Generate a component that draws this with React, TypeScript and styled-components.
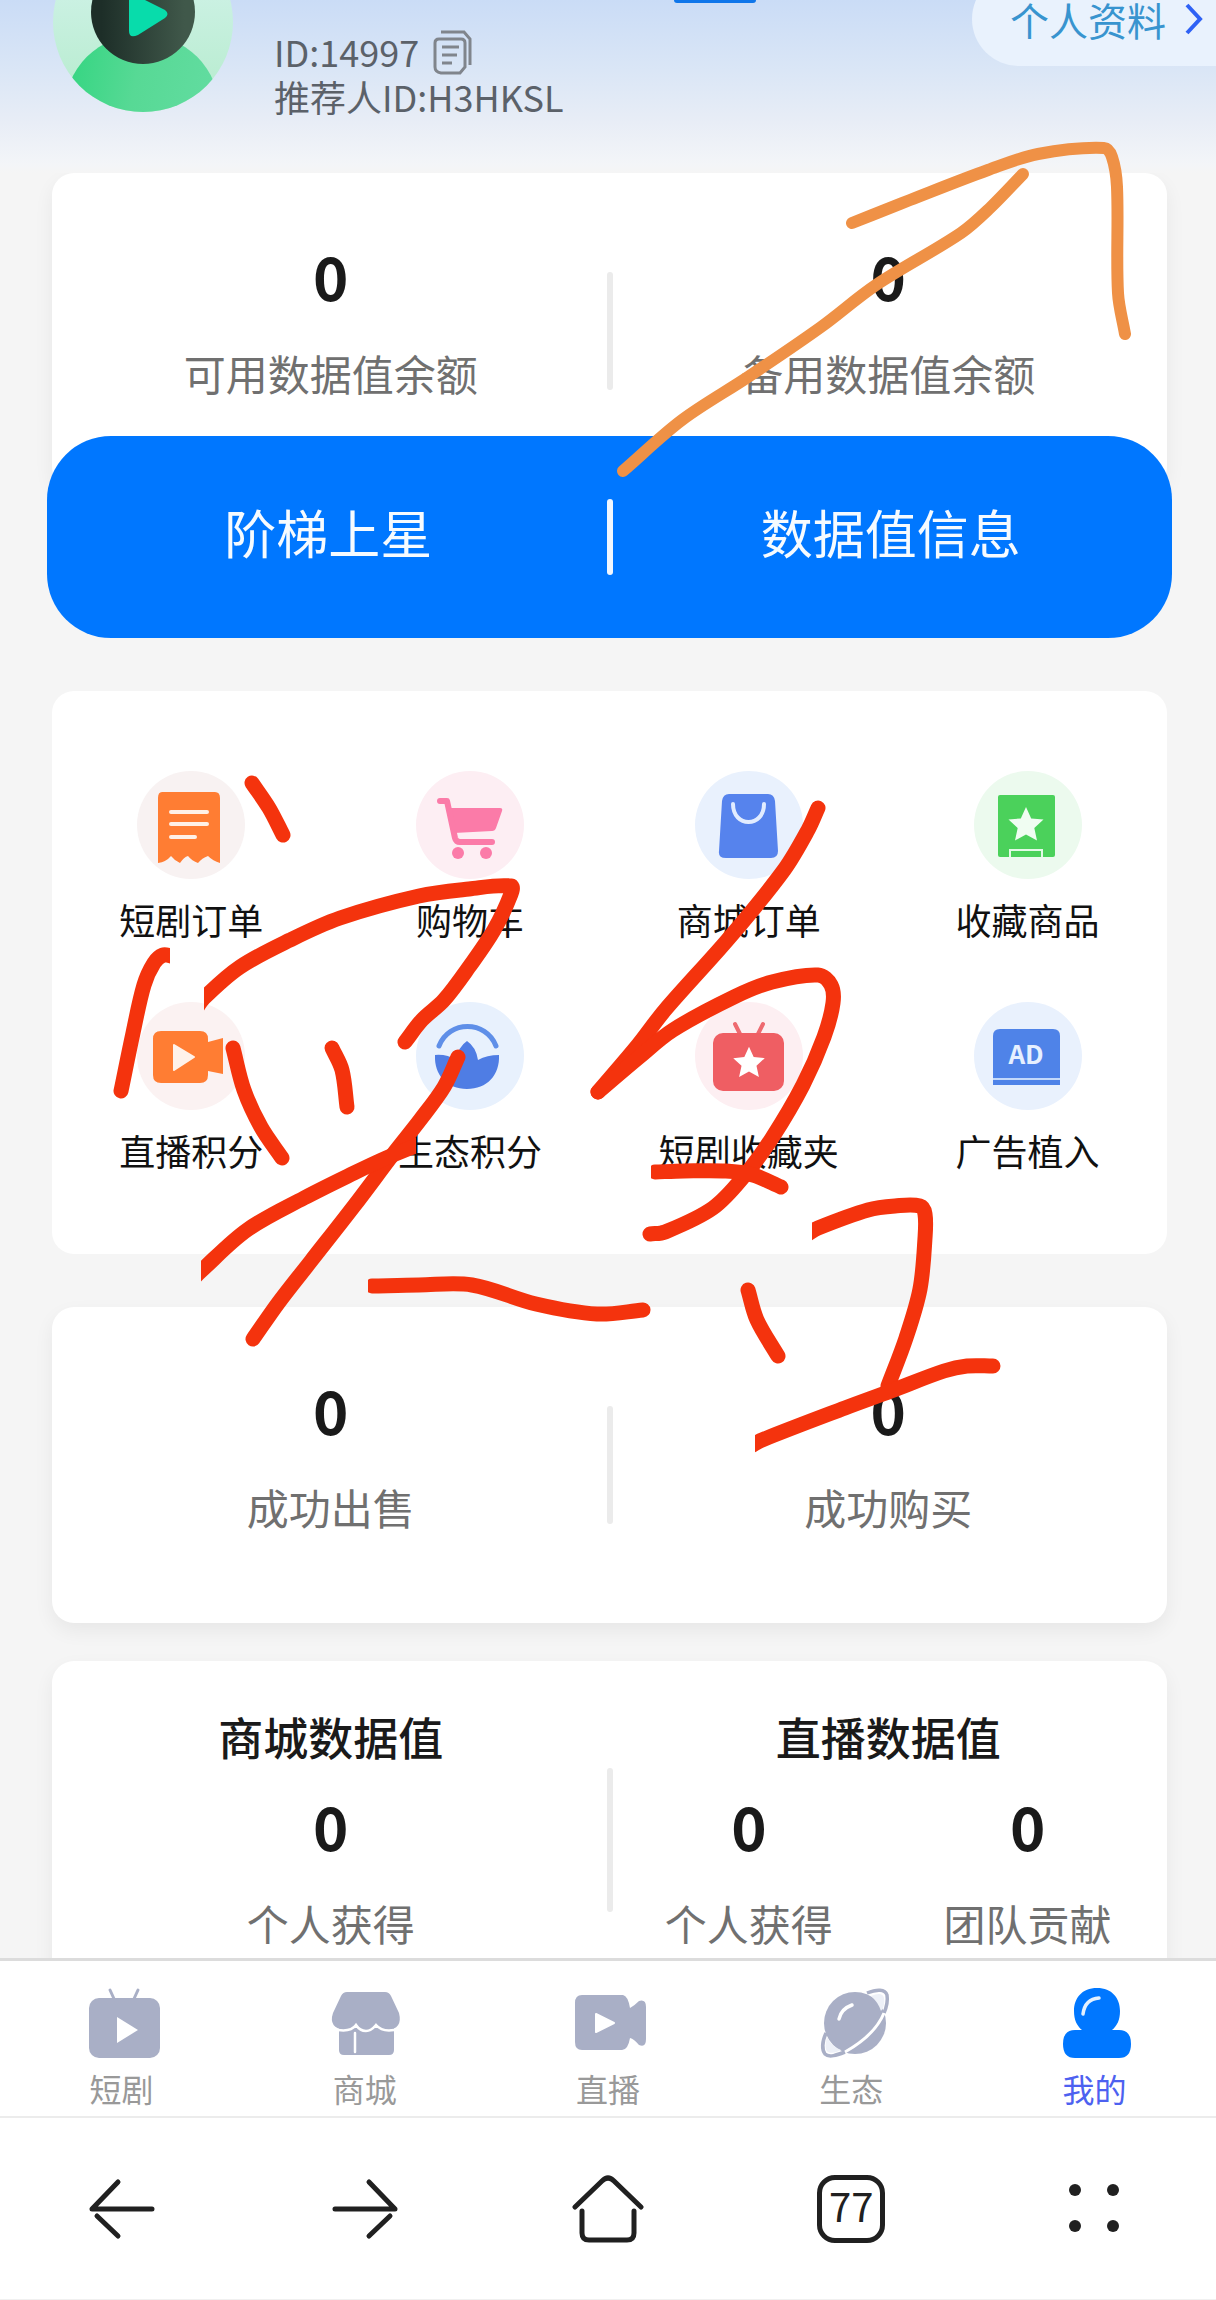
import React from "react";
import styled, { createGlobalStyle } from "styled-components";

const GlobalStyle = createGlobalStyle`
  *, *::before, *::after { box-sizing: border-box; }
  body { margin: 0; background: #f5f5f5; }
  button {
    margin: 0; padding: 0; border: 0; background: none;
    font: inherit; color: inherit; cursor: pointer;
  }
  a { color: inherit; text-decoration: none; }
  svg { display: block; flex: none; }
`;

const Page = styled.div`
  position: relative;
  display: flex;
  flex-direction: column;
  height: 100vh;
  overflow: hidden;
  background: #f5f5f5;
  color: #1a1a1a;
  font-family: "Noto Sans CJK SC", "Noto Sans", sans-serif;
`;

const Content = styled.main`
  flex: 1;
  min-height: 0;
  overflow: hidden;
`;

/* ---------- header ---------- */

const Header = styled.header`
  position: relative;
  display: flex;
  align-items: flex-start;
  height: 173px;
  padding-left: 52px;
  overflow: hidden;
  background: linear-gradient(180deg, #cadcf6 0, #dae6f6 70px, #e8edf6 122px, #f3f5f8 164px, #f5f5f5 173px);
`;

const ActiveMark = styled.span`
  position: absolute;
  top: 0;
  left: 55.4%;
  width: 82px;
  height: 3px;
  border-radius: 0 0 4px 4px;
  background: #0f76ea;
`;

const AvatarSvg = styled.svg`
  margin-top: -70px;
`;

const Identity = styled.div`
  margin-left: 38px;
  padding-top: 29px;
  font-size: 36px;
  line-height: 45px;
  color: #5b6169;
`;

const IdRow = styled.div`
  display: flex;
  align-items: center;
  gap: 14px;
  height: 45px;
`;

const ProfileLink = styled.a`
  display: flex;
  align-items: center;
  gap: 18px;
  height: 94px;
  margin-top: -28px;
  margin-left: auto;
  padding: 0 12px 0 38px;
  border-radius: 47px 0 0 47px;
  background: #e9f2fd;
  color: #3894cf;
  font-size: 39px;
  line-height: 36px;
`;

/* ---------- cards ---------- */

const Stack = styled.div`
  padding: 0 49px 0 52px;
`;

const Card = styled.section<{ $gap?: number; $raised?: boolean }>`
  display: flex;
  align-items: center;
  margin-top: ${(p) => p.$gap ?? 0}px;
  border-radius: 22px;
  background: #fff;
  box-shadow: ${(p) => (p.$raised ? "0 8px 20px rgba(0, 0, 0, 0.06)" : "none")};
`;

const Divider = styled.span<{ $height: number; $light?: boolean }>`
  flex: none;
  width: 6px;
  height: ${(p) => p.$height}px;
  margin: 0 -3px;
  border-radius: 3px;
  background: ${(p) => (p.$light ? "#f1f7ff" : "#ebebeb")};
`;

const Half = styled.div`
  flex: 1;
  padding: 72px 0 86px;
`;

const TitledHalf = styled.div`
  flex: 1;
  padding: 46px 0 66px;
`;

const Stat = styled.div`
  display: flex;
  flex: 1;
  flex-direction: column;
  align-items: center;
  gap: 38px;
`;

const StatRow = styled.div`
  display: flex;
`;

const StatValue = styled.strong`
  font-size: 60px;
  font-weight: 700;
  line-height: 60px;
`;

const StatLabel = styled.span`
  font-size: 42px;
  line-height: 60px;
  color: #707070;
  white-space: nowrap;
`;

const GroupTitle = styled.h2`
  margin: 0 0 28px;
  font-size: 45px;
  font-weight: 500;
  line-height: 60px;
  text-align: center;
`;

const ActionBar = styled.div`
  position: relative;
  display: flex;
  align-items: center;
  height: 202px;
  margin: -53px -5px 0;
  border-radius: 64px;
  background: #0077ff;
  color: #f6fbff;
`;

const ActionButton = styled.button`
  flex: 1;
  height: 100%;
  padding-bottom: 10px;
  font-size: 52px;
  line-height: 60px;
`;

const ShortcutGrid = styled.section`
  display: grid;
  grid-template-columns: repeat(4, 1fr);
  row-gap: 59px;
  margin-top: 53px;
  padding: 80px 0;
  border-radius: 22px;
  background: #fff;
`;

const Shortcut = styled.button`
  display: flex;
  flex-direction: column;
  align-items: center;
  gap: 16px;
  font-size: 36px;
  line-height: 48px;
  color: #111;
`;

const ShortcutIcon = styled.span<{ $tint: string }>`
  width: 108px;
  height: 108px;
  border-radius: 50%;
  background: ${(p) => p.$tint};
`;

/* ---------- bottom bars ---------- */

const TabBar = styled.nav`
  display: flex;
  border-top: 3px solid #dcdcdc;
  background: #fff;
`;

const Tab = styled.a<{ $active?: boolean }>`
  display: flex;
  flex: 1;
  flex-direction: column;
  align-items: center;
  gap: 8px;
  padding: 23px 0 8px;
  font-size: 32px;
  line-height: 40px;
  color: ${(p) => (p.$active ? "#4d61f0" : "#999")};
`;

const BrowserBar = styled.nav`
  display: flex;
  height: 184px;
  border-top: 2px solid #ececec;
  border-bottom: 1px solid #f0f0f0;
  background: #fff;
`;

const BrowserButton = styled.button`
  display: flex;
  flex: 1;
  align-items: center;
  justify-content: center;
`;

const TabCount = styled.span`
  display: flex;
  align-items: center;
  justify-content: center;
  width: 68px;
  height: 68px;
  padding-bottom: 8px;
  border: 5px solid #202020;
  border-radius: 18px;
  font-size: 40px;
  line-height: 48px;
  color: #202020;
`;

const Scribble = styled.svg`
  position: absolute;
  top: 0;
  left: 0;
  width: 100%;
  height: auto;
  pointer-events: none;
`;

/* ---------- drawings ---------- */

const STAR =
  "M0-18 L5.2-6.6 L17.5-5.4 L8.3 3 L11 15.5 L0 9.4 L-11 15.5 L-8.3 3 L-17.5-5.4 L-5.2-6.6Z";

const Avatar = () => (
  <AvatarSvg width="184" height="184" viewBox="0 0 184 184" aria-label="头像">
    <defs>
      <clipPath id="avatarClip"><circle cx="91" cy="92" r="90" /></clipPath>
      <linearGradient id="avatarBg" x1="0" y1="0" x2="0" y2="1">
        <stop offset="0.35" stopColor="#cbf1e3" /><stop offset="1" stopColor="#b4ebcb" />
      </linearGradient>
      <linearGradient id="avatarBody" x1="0" y1="0" x2="1" y2="0.2">
        <stop offset="0" stopColor="#30d57f" /><stop offset="0.5" stopColor="#57d995" /><stop offset="1" stopColor="#62dca0" />
      </linearGradient>
      <linearGradient id="avatarHead" x1="0" y1="0" x2="1" y2="0">
        <stop offset="0.1" stopColor="#1d2e28" /><stop offset="0.9" stopColor="#40584a" />
      </linearGradient>
    </defs>
    <g clipPath="url(#avatarClip)">
      <rect width="184" height="184" fill="url(#avatarBg)" />
      <ellipse cx="90" cy="182" rx="78" ry="78" fill="url(#avatarBody)" />
    </g>
    <circle cx="91" cy="82" r="52" fill="url(#avatarHead)" />
    <path d="M77 62 L113 80 Q118 84 113 88 L86 105 Q77 109 77 101 V62Z" fill="#08dcab" />
  </AvatarSvg>
);

const CopyIcon = () => (
  <svg width="40" height="46" viewBox="0 0 40 46" fill="none" stroke="#80858c" strokeWidth="3">
    <path d="M8 3 H31 L37 10 V36" />
    <path d="M6 10 H28 Q32 10 32 14 V38 L27 44 H8 Q2 43 2 38 V14 Q2 10 6 10Z" />
    <path d="M9 18 H26 M9 26 H24 M9 34 H19" />
  </svg>
);

const ReceiptIcon = () => (
  <svg width="108" height="108" viewBox="0 0 108 108">
    <path d="M25 21 H78 Q83 21 83 27 V92 Q76 90 71 85 Q65 87 61 92 Q55 90 51 85 Q47 86 43 92 Q38 90 34 85 Q29 91 21 92 V27 Q21 21 25 21Z" fill="#ff7d33" />
    <path d="M34 41 H70 M34 53 H70 M34 66 H58" stroke="#fff0e6" strokeWidth="4" strokeLinecap="round" />
  </svg>
);

const CartIcon = () => (
  <svg width="108" height="108" viewBox="0 0 108 108" fill="#fb7ba8">
    <path d="M32 37 H84 Q87 37 86 40 L80 57 Q79 60 76 60 L38 62Z" />
    <path d="M24 30 H31 L39 67 Q40 71 44 71 H76" fill="none" stroke="#fb7ba8" strokeWidth="6" strokeLinecap="round" strokeLinejoin="round" />
    <circle cx="42" cy="82" r="6" />
    <circle cx="70" cy="82" r="6" />
  </svg>
);

const BagIcon = () => (
  <svg width="108" height="108" viewBox="0 0 108 108">
    <path d="M34 23 H73 Q79 23 80 30 L83 80 Q83 87 76 87 H31 Q23 87 24 80 L27 30 Q28 23 34 23Z" fill="#5683ed" />
    <path d="M38 33 C38 57 69 57 69 33" fill="none" stroke="#e1ecff" strokeWidth="4" strokeLinecap="round" />
  </svg>
);

const BookStarIcon = () => (
  <svg width="108" height="108" viewBox="0 0 108 108">
    <rect x="24" y="24" width="57" height="62" rx="2" fill="#4bd15b" />
    <path d={STAR} transform="translate(52 54)" fill="#f0fdf2" />
    <path d="M36 86 V79 H68 V86" fill="none" stroke="#e3fae6" strokeWidth="2" />
  </svg>
);

const VideoIcon = () => (
  <svg width="108" height="108" viewBox="0 0 108 108">
    <path d="M24 29 H63 Q71 29 71 37 V40 L86 36 V72 L71 69 V73 Q71 81 63 81 H24 Q16 81 16 73 V37 Q16 29 24 29Z" fill="#ff7d33" />
    <path d="M37 43 L57 55 L37 68Z" fill="#fff2ea" stroke="#fff2ea" strokeWidth="2" strokeLinejoin="round" />
  </svg>
);

const LotusIcon = () => (
  <svg width="108" height="108" viewBox="0 0 108 108">
    <path d="M23 44 C33 18 70 18 80 44" fill="none" stroke="#5f8fe8" strokeWidth="5" strokeLinecap="round" />
    <path d="M51 39 Q60 45 62 58 Q71 53 83 53 C84 73 71 87 51 87 C31 87 18 73 19 53 Q31 52 40 58 Q42 45 51 39Z" fill="#4f7de4" />
  </svg>
);

const TvStarIcon = () => (
  <svg width="108" height="108" viewBox="0 0 108 108">
    <path d="M40 22 L46 34 M68 22 L62 34" stroke="#ee6a70" strokeWidth="4" strokeLinecap="round" />
    <rect x="18" y="31" width="71" height="58" rx="10" fill="#ef5e63" />
    <path d={STAR} transform="translate(54 61) scale(0.9)" fill="#fff" />
  </svg>
);

const AdIcon = () => (
  <svg width="108" height="108" viewBox="0 0 108 108">
    <path d="M26 27 H79 Q86 27 86 34 V76 H19 V34 Q19 27 26 27Z" fill="#4f83e8" />
    <path d="M19 76 H86 V83 H19Z" fill="#4f83e8" />
    <path d="M19 77 H86" stroke="#c3d9fb" strokeWidth="2" />
    <text x="52" y="62" textAnchor="middle" fontSize="26" fontWeight="700" fill="#e6f0ff">AD</text>
  </svg>
);

const GREY = "#a9afc6";

const TvTabIcon = () => (
  <svg width="80" height="76" viewBox="0 0 80 76">
    <path d="M28 6 L33 17 M56 6 L51 17" stroke={GREY} strokeWidth="3" strokeLinecap="round" />
    <rect x="7" y="14" width="71" height="60" rx="10" fill={GREY} />
    <path d="M35 33 L56 46 L35 59Z" fill="#fff" />
  </svg>
);

const ShopTabIcon = () => (
  <svg width="80" height="76" viewBox="0 0 80 76">
    <path d="M14 44 H69 V66 Q69 71 64 71 H19 Q14 71 14 66Z" fill={GREY} />
    <path d="M22 8 H60 Q64 8 66 12 L74 29 Q78 45 62 46 Q55 46 51 41 Q46 47 41 47 Q35 47 31 41 Q27 46 20 46 Q3 44 8 29 L16 12 Q18 8 22 8Z" fill={GREY} />
    <path d="M13 46 Q26 48 31 41 Q35 47 41 47 Q46 47 51 41 Q57 48 69 46 M30 49 V68" fill="none" stroke="#fff" strokeWidth="2.5" strokeLinecap="round" />
  </svg>
);

const LiveTabIcon = () => (
  <svg width="80" height="76" viewBox="0 0 80 76">
    <path d="M14 11 H55 Q60 12 62 24 Q66 22 71 17 Q78 15 78 23 V55 Q78 64 71 61 Q66 55 62 54 Q60 66 54 66 H14 Q7 66 7 58 V19 Q7 11 14 11Z" fill={GREY} />
    <path d="M28 30 L46 39 L28 48Z" fill="#fff" stroke="#fff" strokeWidth="2" strokeLinejoin="round" />
  </svg>
);

const PlanetTabIcon = () => (
  <svg width="80" height="76" viewBox="0 0 80 76" fill="none">
    <circle cx="44" cy="39" r="31" fill={GREY} />
    <path d="M56 9 C66 5 74 5 76 11 C77 17 76 22 73 29" stroke={GREY} strokeWidth="3.5" />
    <path d="M15 49 C11 58 11 66 14 70 C18 74 26 71 34 68" stroke={GREY} strokeWidth="3.5" />
    <path d="M60 12 C67 9 72 9 73 14 C74 20 72 25 70 27 Q67 18 60 12Z" fill="#eef1f8" />
    <path d="M16 53 C14 61 14 66 17 68 C21 70 26 68 30 66 Q20 62 16 53Z" fill="#eef1f8" />
    <path d="M73 29 Q64 51 34 68" stroke="#fff" strokeWidth="3" />
    <path d="M41 21 Q30 25 28 35" stroke="#fff" strokeWidth="3.5" strokeLinecap="round" />
  </svg>
);

const MeTabIcon = () => (
  <svg width="80" height="76" viewBox="0 0 80 76">
    <path d="M43 4 C58 4 66 14 66 27 C66 36 63 42 58 46 H65 Q77 46 77 60 Q77 74 65 74 H21 Q9 74 9 60 Q9 46 21 46 H28 C23 42 20 36 20 27 C20 14 28 4 43 4Z" fill="#0077ff" />
    <path d="M45 14 Q31 15 29 30" fill="none" stroke="#e4f1ff" strokeWidth="3.5" strokeLinecap="round" />
  </svg>
);

const line = { fill: "none", stroke: "#202020", strokeWidth: 5, strokeLinecap: "round" as const };

const BackIcon = () => (
  <svg width="72" height="72" viewBox="0 0 72 72" {...line}>
    <path d="M66 36 H6 L32 9 M11 43 L32 63" strokeLinejoin="round" />
  </svg>
);

const ForwardIcon = () => (
  <svg width="72" height="72" viewBox="0 0 72 72" {...line}>
    <path d="M6 36 H66 L40 9 M61 43 L40 63" strokeLinejoin="round" />
  </svg>
);

const HomeIcon = () => (
  <svg width="76" height="72" viewBox="0 0 76 72" {...line}>
    <path d="M5 34 L32 8 Q38 2 44 8 L71 34" />
    <path d="M12 38 V60 Q12 67 19 67 H57 Q64 67 64 60 V38" />
  </svg>
);

const DotsIcon = () => (
  <svg width="72" height="72" viewBox="0 0 72 72" fill="#202020">
    <circle cx="17" cy="17" r="6" /><circle cx="55" cy="17" r="6" />
    <circle cx="17" cy="53" r="6" /><circle cx="55" cy="53" r="6" />
  </svg>
);

/* ---------- freehand marks ---------- */

type Point = [number, number];

interface Mark {
  color: string;
  width: number;
  points: Point[];
  minX?: number;
  maxX?: number;
}

const ORANGE = { color: "#ef9146", width: 12 };
const RED = { color: "#f4330d", width: 15 };

const marks: Mark[] = [
  { ...ORANGE, points: [[623, 471], [682, 420], [748, 377], [821, 327], [876, 285], [961, 233], [990, 208], [1023, 174]] },
  { ...ORANGE, points: [[852, 223], [910, 200], [988, 170], [1038, 154], [1104, 148], [1112, 157], [1117, 187], [1118, 293], [1125, 334]] },
  { ...RED, points: [[252, 783], [269, 808], [283, 835]] },
  { ...RED, maxX: 170, points: [[171, 956], [163, 955], [154, 963], [144, 985], [133, 1033], [121, 1091]] },
  { ...RED, minX: 204, points: [[194, 1012], [204, 998], [240, 967], [290, 940], [340, 918], [419, 896], [469, 889], [511, 886], [511, 894], [494, 930], [469, 967], [444, 1000], [422, 1020], [405, 1042]] },
  { ...RED, points: [[233, 1048], [244, 1090], [261, 1127], [282, 1158]] },
  { ...RED, points: [[332, 1048], [342, 1070], [347, 1107]] },
  { ...RED, points: [[458, 1057], [444, 1087], [420, 1120], [394, 1153], [354, 1206], [311, 1261], [279, 1302], [253, 1339]] },
  { ...RED, minX: 201, maxX: 416, points: [[420, 1144], [386, 1158], [354, 1173], [304, 1198], [247, 1230], [201, 1271], [190, 1282]] },
  { ...RED, minX: 368, points: [[372, 1286], [419, 1285], [472, 1285], [536, 1304], [597, 1314], [643, 1310]] },
  { ...RED, points: [[818, 808], [808, 830], [784, 870], [730, 937], [665, 1010], [638, 1045], [598, 1092]] },
  { ...RED, points: [[598, 1092], [638, 1058], [673, 1030], [734, 997], [772, 982], [818, 975], [831, 985], [833, 1003], [824, 1037], [803, 1085], [772, 1138], [745, 1175], [713, 1208], [665, 1232], [650, 1234]] },
  { ...RED, minX: 651, points: [[655, 1172], [684, 1171], [726, 1171], [753, 1175], [781, 1187]] },
  { ...RED, minX: 812, points: [[808, 1234], [818, 1228], [868, 1210], [895, 1206], [920, 1206], [925, 1214], [925, 1238], [920, 1289], [906, 1338], [888, 1386]] },
  { ...RED, points: [[748, 1290], [757, 1320], [778, 1356]] },
  { ...RED, minX: 755, points: [[751, 1446], [762, 1440], [845, 1408], [891, 1391], [944, 1371], [967, 1366], [993, 1366]] },
];

/** Runs a smooth curve through all the points of a pen stroke. */
function smoothPath(p: Point[]): string {
  const last = p.length - 1;
  const tangent = (i: number): Point => {
    const a = p[Math.max(i - 1, 0)];
    const b = p[Math.min(i + 1, last)];
    const length = Math.hypot(b[0] - a[0], b[1] - a[1]) || 1;
    return [(b[0] - a[0]) / length, (b[1] - a[1]) / length];
  };
  let d = `M${p[0][0]} ${p[0][1]}`;
  for (let i = 0; i < last; i++) {
    const [x1, y1] = p[i];
    const [x2, y2] = p[i + 1];
    const reach = Math.hypot(x2 - x1, y2 - y1) / 3;
    const [tx1, ty1] = tangent(i);
    const [tx2, ty2] = tangent(i + 1);
    d += ` C${x1 + tx1 * reach} ${y1 + ty1 * reach} ${x2 - tx2 * reach} ${y2 - ty2 * reach} ${x2} ${y2}`;
  }
  return d;
}

const Marks = () => (
  <Scribble viewBox="0 0 1216 2300" aria-hidden="true">
    {marks.map((m, i) => {
      const left = m.minX ?? 0;
      const right = m.maxX ?? 1216;
      return (
        <g key={i}>
          <clipPath id={`mark${i}`}><rect x={left} y="0" width={right - left} height="2300" /></clipPath>
          <path
            d={smoothPath(m.points)}
            clipPath={`url(#mark${i})`}
            fill="none"
            stroke={m.color}
            strokeWidth={m.width}
            strokeLinecap="round"
            strokeLinejoin="round"
          />
        </g>
      );
    })}
  </Scribble>
);

/* ---------- page ---------- */

const shortcuts = [
  { label: "短剧订单", tint: "#f8f2f2", Icon: ReceiptIcon },
  { label: "购物车", tint: "#fdeef3", Icon: CartIcon },
  { label: "商城订单", tint: "#e9f1fd", Icon: BagIcon },
  { label: "收藏商品", tint: "#ecfaee", Icon: BookStarIcon },
  { label: "直播积分", tint: "#fbf2f2", Icon: VideoIcon },
  { label: "生态积分", tint: "#e8f1fd", Icon: LotusIcon },
  { label: "短剧收藏夹", tint: "#fdeff2", Icon: TvStarIcon },
  { label: "广告植入", tint: "#e9f1fd", Icon: AdIcon },
];

const tabs = [
  { label: "短剧", Icon: TvTabIcon },
  { label: "商城", Icon: ShopTabIcon },
  { label: "直播", Icon: LiveTabIcon },
  { label: "生态", Icon: PlanetTabIcon },
  { label: "我的", Icon: MeTabIcon, active: true },
];

const StatBlock = ({ value, label }: { value: string; label: string }) => (
  <Stat>
    <StatValue>{value}</StatValue>
    <StatLabel>{label}</StatLabel>
  </Stat>
);

export default function App() {
  return (
    <Page>
      <GlobalStyle />
      <Content>
        <Header>
          <ActiveMark />
          <Avatar />
          <Identity>
            <IdRow>
              <span>ID:14997</span>
              <button aria-label="复制"><CopyIcon /></button>
            </IdRow>
            <div>推荐人ID:H3HKSL</div>
          </Identity>
          <ProfileLink href="#profile">
            个人资料
            <svg width="20" height="32" viewBox="0 0 20 32" fill="none" stroke="#2f62f5" strokeWidth="4">
              <path d="M3 2 L16 16 L3 30" />
            </svg>
          </ProfileLink>
        </Header>

        <Stack>
          <Card $raised>
            <Half><StatBlock value="0" label="可用数据值余额" /></Half>
            <Divider $height={118} />
            <Half><StatBlock value="0" label="备用数据值余额" /></Half>
          </Card>
          <ActionBar>
            <ActionButton>阶梯上星</ActionButton>
            <Divider $height={76} $light />
            <ActionButton>数据值信息</ActionButton>
          </ActionBar>

          <ShortcutGrid>
            {shortcuts.map(({ label, tint, Icon }) => (
              <Shortcut key={label}>
                <ShortcutIcon $tint={tint}><Icon /></ShortcutIcon>
                {label}
              </Shortcut>
            ))}
          </ShortcutGrid>

          <Card $gap={53} $raised>
            <Half><StatBlock value="0" label="成功出售" /></Half>
            <Divider $height={118} />
            <Half><StatBlock value="0" label="成功购买" /></Half>
          </Card>

          <Card $gap={38} $raised>
            <TitledHalf>
              <GroupTitle>商城数据值</GroupTitle>
              <StatBlock value="0" label="个人获得" />
            </TitledHalf>
            <Divider $height={144} />
            <TitledHalf>
              <GroupTitle>直播数据值</GroupTitle>
              <StatRow>
                <StatBlock value="0" label="个人获得" />
                <StatBlock value="0" label="团队贡献" />
              </StatRow>
            </TitledHalf>
          </Card>
        </Stack>
      </Content>

      <TabBar>
        {tabs.map(({ label, Icon, active }) => (
          <Tab key={label} href={`#${label}`} $active={active}>
            <Icon />
            {label}
          </Tab>
        ))}
      </TabBar>

      <BrowserBar>
        <BrowserButton aria-label="后退"><BackIcon /></BrowserButton>
        <BrowserButton aria-label="前进"><ForwardIcon /></BrowserButton>
        <BrowserButton aria-label="主页"><HomeIcon /></BrowserButton>
        <BrowserButton><TabCount>77</TabCount></BrowserButton>
        <BrowserButton aria-label="菜单"><DotsIcon /></BrowserButton>
      </BrowserBar>

      <Marks />
    </Page>
  );
}
